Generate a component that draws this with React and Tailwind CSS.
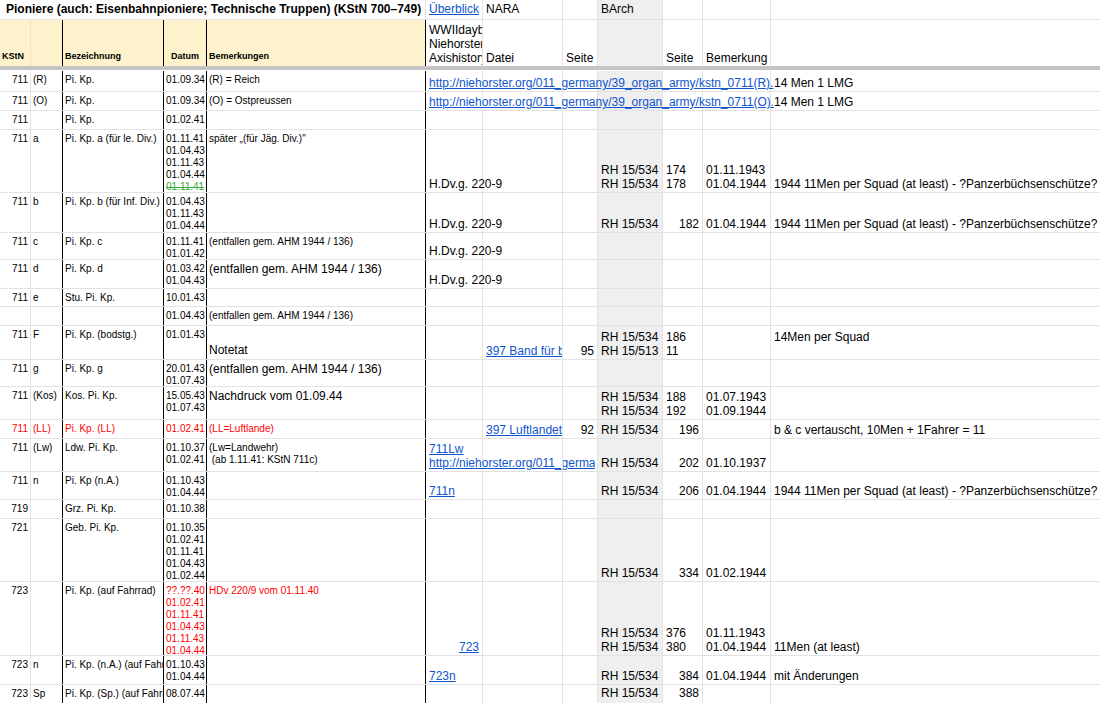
const W = { a: 31, b: 32, c: 101, d: 43, e: 219, f: 57, g: 80, h: 35, i: 65, j: 40, k: 68 };

const link = 'text-[#1155cc] underline';
const R = 'text-[#ff0000]';

const rows = [
  { h: 21, a: '711', b: '(R)', c: 'Pi. Kp.', d: ['01.09.34'], e: '(R) = Reich',
    f: <span className={`${link} relative z-10`}>http://niehorster.org/011_germany/39_organ_army/kstn_0711(R).</span>, l: ['14 Men 1 LMG'] },
  { h: 19, a: '711', b: '(O)', c: 'Pi. Kp.', d: ['01.09.34'], e: '(O) = Ostpreussen',
    f: <span className={`${link} relative z-10`}>http://niehorster.org/011_germany/39_organ_army/kstn_0711(O).</span>, l: ['14 Men 1 LMG'] },
  { h: 19, a: '711', c: 'Pi. Kp.', d: ['01.02.41'] },
  { h: 63, a: '711', b: 'a', c: 'Pi. Kp. a (für le. Div.)',
    d: ['01.11.41', '01.04.43', '01.11.43', '01.04.44', { t: '01.11.41', cls: 'text-[#38a83a] line-through' }],
    e: 'später „(für Jäg. Div.)"', f: 'H.Dv.g. 220-9', i: ['RH 15/534', 'RH 15/534'], j: ['174', '178'],
    k: ['01.11.1943', '01.04.1944'], l: ['1944 11Men per Squad (at least) - ?Panzerbüchsenschütze?'] },
  { h: 40, a: '711', b: 'b', c: 'Pi. Kp. b (für Inf. Div.)', d: ['01.04.43', '01.11.43', '01.04.44'],
    f: 'H.Dv.g. 220-9', i: ['RH 15/534'], j: ['182'], jr: true, k: ['01.04.1944'],
    l: ['1944 11Men per Squad (at least) - ?Panzerbüchsenschütze?'] },
  { h: 27, a: '711', b: 'c', c: 'Pi. Kp. c', d: ['01.11.41', '01.01.42'], e: '(entfallen gem. AHM 1944 / 136)', f: 'H.Dv.g. 220-9' },
  { h: 29, a: '711', b: 'd', c: 'Pi. Kp. d', d: ['01.03.42', '01.04.43'], e: '(entfallen gem. AHM 1944 / 136)', eBig: true, f: 'H.Dv.g. 220-9' },
  { h: 18, a: '711', b: 'e', c: 'Stu. Pi. Kp.', d: ['10.01.43'] },
  { h: 19, d: ['01.04.43'], e: '(entfallen gem. AHM 1944 / 136)' },
  { h: 34, a: '711', b: 'F', c: 'Pi. Kp. (bodstg.)', d: ['01.01.43'], eBottom: 'Notetat',
    g: <span className={link}>397 Band für b</span>, hh: '95', i: ['RH 15/534', 'RH 15/513'], j: ['186', '11'],
    l: ['14Men per Squad', '\u00a0'] },
  { h: 27, a: '711', b: 'g', c: 'Pi. Kp. g', d: ['20.01.43', '01.07.43'], e: '(entfallen gem. AHM 1944 / 136)', eBig: true },
  { h: 33, a: '711', b: '(Kos)', c: 'Kos. Pi. Kp.', d: ['15.05.43', '01.07.43'], e: 'Nachdruck vom 01.09.44', eBig: true,
    i: ['RH 15/534', 'RH 15/534'], j: ['188', '192'], k: ['01.07.1943', '01.09.1944'] },
  { h: 19, red: true, a: '711', b: '(LL)', c: 'Pi. Kp. (LL)', d: ['01.02.41'], e: '(LL=Luftlande)',
    g: <span className={link}>397 Luftlandetr</span>, hh: '92', i: ['RH 15/534'], j: ['196'], jr: true,
    l: ['b & c vertauscht, 10Men + 1Fahrer = 11'] },
  { h: 33, a: '711', b: '(Lw)', c: 'Ldw. Pi. Kp.', d: ['01.10.37', '01.02.41'], e: ['(Lw=Landwehr)', '\u00a0(ab 1.11.41: KStN 711c)'],
    f: <div className="w-[166px] overflow-hidden"><div className={link}>711Lw</div><div className={link}>http://niehorster.org/011_germany/39_organ_army/kstn</div></div>,
    i: ['RH 15/534'], j: ['202'], jr: true, k: ['01.10.1937'] },
  { h: 28, a: '711', b: 'n', c: 'Pi. Kp (n.A.)', d: ['01.10.43', '01.04.44'], f: <span className={link}>711n</span>,
    i: ['RH 15/534'], j: ['206'], jr: true, k: ['01.04.1944'], l: ['1944 11Men per Squad (at least) - ?Panzerbüchsenschütze?'] },
  { h: 19, a: '719', c: 'Grz. Pi. Kp.', d: ['01.10.38'] },
  { h: 63, a: '721', c: 'Geb. Pi. Kp.', d: ['01.10.35', '01.02.41', '01.11.41', '01.04.43', '01.02.44'],
    i: ['RH 15/534'], j: ['334'], jr: true, k: ['01.02.1944'] },
  { h: 74, a: '723', c: 'Pi. Kp. (auf Fahrrad)', dRed: true, d: ['??.??.40', '01.02.41', '01.11.41', '01.04.43', '01.11.43', '01.04.44'],
    e: 'HDv 220/9 vom 01.11.40', eRed: true, f: <div className={`${link} text-right`}>723</div>,
    i: ['RH 15/534', 'RH 15/534'], j: ['376', '380'], k: ['01.11.1943', '01.04.1944'], l: ['11Men (at least)'] },
  { h: 29, a: '723', b: 'n', c: 'Pi. Kp. (n.A.) (auf Fahrrad)', d: ['01.10.43', '01.04.44'], f: <span className={link}>723n</span>,
    i: ['RH 15/534'], j: ['384'], jr: true, k: ['01.04.1944'], l: ['mit Änderungen'] },
  { h: 26, a: '723', b: 'Sp', c: 'Pi. Kp. (Sp.) (auf Fahrrad)', d: ['08.07.44'], i: ['RH 15/534'], j: ['388'], jr: true, top: true },
];

function LCell({ w, className = '', children }) {
  return (
    <div style={{ width: w }} className={`shrink-0 overflow-hidden whitespace-nowrap text-[10px] leading-[12px] pt-[3px] px-[2px] ${className}`}>
      {children}
    </div>
  );
}

function RCell({ w, className = '', children, top }) {
  return (
    <div style={{ width: w }} className={`shrink-0 flex flex-col ${top ? 'justify-start pt-[1px]' : 'justify-end pb-[1px]'} whitespace-nowrap text-[12px] leading-[14px] px-[3px] border-r border-[#e2e2e2] ${className}`}>
      {children}
    </div>
  );
}

function Row({ r }) {
  const red = r.red ? R : '';
  const eLines = Array.isArray(r.e) ? r.e : r.e ? [r.e] : [];
  return (
    <div style={{ height: r.h }} className="flex border-b border-[#e2e2e2] overflow-hidden">
      <LCell w={W.a} className={`text-right border-r border-[#e2e2e2] ${red}`}>{r.a}</LCell>
      <LCell w={W.b} className={`border-r border-black ${red}`}>{r.b}</LCell>
      <LCell w={W.c} className={`border-r border-black ${red}`}>{r.c}</LCell>
      <LCell w={W.d} className={`text-right border-r border-black ${red} ${r.dRed ? R : ''}`}>
        {r.d.map((x, i) => typeof x === 'string'
          ? <div key={i}>{x}</div>
          : <div key={i} className={x.cls}>{x.t}</div>)}
      </LCell>
      <div style={{ width: W.e }} className={`shrink-0 flex flex-col border-r border-black px-[2px] whitespace-nowrap ${red} ${r.eRed ? R : ''}`}>
        {r.eBig
          ? <div className="text-[12px] leading-[14px] pt-[2px]">{r.e}</div>
          : eLines.map((x, i) => <div key={i} className={`text-[10px] leading-[12px] ${i === 0 ? 'pt-[3px]' : ''}`}>{x}</div>)}
        {r.eBottom && <div className="mt-auto text-[12px] leading-[14px] pb-[2px]">{r.eBottom}</div>}
      </div>
      <RCell w={W.f} top={r.top}>{r.f}</RCell>
      <RCell w={W.g} top={r.top} className="overflow-hidden">{r.g}</RCell>
      <RCell w={W.h} top={r.top} className="text-right">{r.hh}</RCell>
      <RCell w={W.i} top={r.top} className="bg-[#efefef]">{(r.i || []).map((x, i) => <div key={i}>{x}</div>)}</RCell>
      <RCell w={W.j} top={r.top} className={r.jr ? 'text-right' : ''}>{(r.j || []).map((x, i) => <div key={i}>{x}</div>)}</RCell>
      <RCell w={W.k} top={r.top}>{(r.k || []).map((x, i) => <div key={i}>{x}</div>)}</RCell>
      <RCell w={400} top={r.top} className="border-r-0">{(r.l || []).map((x, i) => <div key={i}>{x}</div>)}</RCell>
    </div>
  );
}

export default function App() {
  const hd = 'shrink-0 flex items-end pb-[4px] px-[2px] text-[9px] font-bold leading-[11px]';
  return (
    <div className="w-[1100px] h-[703px] overflow-hidden bg-white text-black" style={{ fontFamily: '"Liberation Sans", Arial, sans-serif' }}>
      {/* header 1 */}
      <div className="flex h-[20px] border-b border-[#e2e2e2]">
        <div style={{ width: 426 }} className="shrink-0 border-r border-[#e2e2e2] px-[6px] text-[12px] font-bold leading-[19px] whitespace-nowrap">
          Pioniere (auch: Eisenbahnpioniere; Technische Truppen) (KStN 700–749)
        </div>
        <RCell w={W.f} className="!justify-center"><span className={link}>Überblick</span></RCell>
        <RCell w={W.g} className="!justify-center">NARA</RCell>
        <RCell w={W.h} />
        <RCell w={W.i} className="!justify-center bg-[#efefef]">BArch</RCell>
        <RCell w={W.j} />
        <RCell w={W.k} />
        <RCell w={400} className="border-r-0" />
      </div>
      {/* header 2 */}
      <div className="flex h-[46px]">
        <div style={{ width: W.a }} className={`${hd} bg-[#fdf2cc] border-r border-[#f0e4b8]`}>KStN</div>
        <div style={{ width: W.b }} className={`${hd} bg-[#fdf2cc] border-r border-black`} />
        <div style={{ width: W.c }} className={`${hd} bg-[#fdf2cc] border-r border-black`}>Bezeichnung</div>
        <div style={{ width: W.d }} className={`${hd} bg-[#fdf2cc] border-r border-black justify-center`}>Datum</div>
        <div style={{ width: W.e }} className={`${hd} bg-[#fdf2cc] border-r border-black`}>Bemerkungen</div>
        <RCell w={W.f} className="overflow-hidden">
          <div>WWIIdaybook</div><div>Niehorster</div><div>Axishistory</div>
        </RCell>
        <RCell w={W.g}>Datei</RCell>
        <RCell w={W.h}>Seite</RCell>
        <RCell w={W.i} className="bg-[#efefef]" />
        <RCell w={W.j}>Seite</RCell>
        <RCell w={W.k}>Bemerkung</RCell>
        <RCell w={400} className="border-r-0" />
      </div>
      <div className="h-[5px] bg-white border-t-[4px] border-[#c4c4c4]" />
      {rows.map((r, i) => <Row key={i} r={r} />)}
    </div>
  );
}
